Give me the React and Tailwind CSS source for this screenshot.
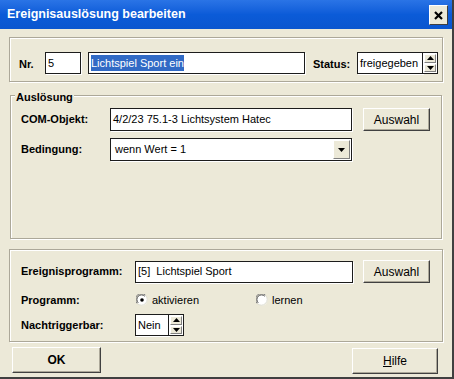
import React from "react";

const label = "font-['Liberation_Sans',Arial,sans-serif] text-[11px] font-bold text-black";
const field =
  "flex items-center bg-white border border-[#1c1c1c] shadow-[1px_1px_0_#ffffff] font-['Liberation_Sans',Arial,sans-serif] text-[11px] text-black pl-[2px] whitespace-nowrap overflow-hidden";
const btn =
  "flex items-center justify-center bg-[#ece9d8] border border-t-white border-l-white border-b-[#404040] border-r-[#404040] shadow-[inset_-1px_-1px_0_#aca899] font-['Liberation_Sans',Arial,sans-serif] text-[12px] text-black";
const frame = "border border-[#aca899] shadow-[inset_1px_1px_0_#ffffff,1px_1px_0_#ffffff]";
const plain = "font-['Liberation_Sans',Arial,sans-serif] text-[11px] text-black";

function Arrow({ up }) {
  return (
    <svg width="7" height="4" viewBox="0 0 7 4">
      {up ? <path d="M3.5 0 L7 4 L0 4 Z" fill="#000" /> : <path d="M0 0 L7 0 L3.5 4 Z" fill="#000" />}
    </svg>
  );
}

function Spin() {
  return (
    <div className="flex flex-col w-[15px] h-[22px] border border-[#1c1c1c] border-l-0 bg-white p-[1px] gap-[1px]">
      <div className="flex-1 flex items-center justify-center bg-[#ece9d8] border border-t-white border-l-white border-b-[#808080] border-r-[#808080]">
        <Arrow up />
      </div>
      <div className="flex-1 flex items-center justify-center bg-[#ece9d8] border border-t-white border-l-white border-b-[#808080] border-r-[#808080]">
        <Arrow />
      </div>
    </div>
  );
}

function Radio({ checked }) {
  return (
    <svg width="12" height="12" viewBox="0 0 12 12">
      <circle cx="6" cy="6" r="5.5" fill="#fff" />
      <path d="M1.2 9.5 A5.5 5.5 0 0 1 9.5 1.2" stroke="#808080" strokeWidth="1" fill="none" />
      <path d="M2.2 8.8 A4.3 4.3 0 0 1 8.8 2.2" stroke="#404040" strokeWidth="1" fill="none" />
      <path d="M9.5 1.2 A5.5 5.5 0 0 1 1.2 9.5" stroke="#dcdcd0" strokeWidth="1" fill="none" />
      {checked ? <circle cx="6" cy="6" r="1.8" fill="#000" /> : null}
    </svg>
  );
}

export default function App() {
  return (
    <div className="w-[454px] h-[379px] bg-[#ece9d8] border-r-2 border-b-2 border-r-[#404040] border-b-[#404040] flex flex-col overflow-hidden">
      <div className="h-[29px] shrink-0 flex items-center justify-between pl-[7px] pr-[4px] bg-gradient-to-b from-[#2a74e6] via-[#0b5bd8] to-[#0a56cf]">
        <span className="font-['Liberation_Sans',Arial,sans-serif] text-[12.5px] font-bold text-white">
          Ereignisauslösung bearbeiten
        </span>
        <div className="w-[19px] h-[20px] mt-[1px] flex items-center justify-center bg-[#ece9d8] border border-t-white border-l-white border-b-[#404040] border-r-[#404040]">
          <svg width="9" height="9" viewBox="0 0 9 9">
            <path d="M1 1 L8 8 M8 1 L1 8" stroke="#000" strokeWidth="2.2" />
          </svg>
        </div>
      </div>

      <div className={`mt-[8px] mx-[9px] h-[45px] flex items-start pt-[14px] pl-[9px] ${frame}`}>
        <span className={`${label} w-[26px] mt-[4px]`}>Nr.</span>
        <div className={`${field} w-[36px] h-[22px]`}>5</div>
        <div className={`${field} ml-[7px] w-[217px] h-[22px]`}>
          <span className="bg-[#316ac5] text-white">Lichtspiel Sport ein</span>
        </div>
        <span className={`${label} ml-[8px] w-[44px] mt-[4px]`}>Status:</span>
        <div className={`${field} w-[66px] h-[22px]`}>freigegeben</div>
        <Spin />
      </div>

      <div className={`relative mt-[13px] mx-[10px] h-[144px] pt-[12px] pl-[10px] ${frame}`}>
        <span className={`${label} absolute -top-[7px] left-[4px] bg-[#ece9d8] px-[1px]`}>Auslösung</span>
        <div className="flex items-center">
          <span className={`${label} w-[89px]`}>COM-Objekt:</span>
          <div className={`${field} w-[242px] h-[23px]`}>4/2/23 75.1-3 Lichtsystem Hatec</div>
          <div className={`${btn} ml-[11px] w-[67px] h-[23px]`}>Auswahl</div>
        </div>
        <div className="flex items-center mt-[7px]">
          <span className={`${label} w-[89px]`}>Bedingung:</span>
          <div className={`${field} w-[242px] h-[23px] justify-between pr-[1px]`}>
            <span className="pl-[2px]">wenn Wert = 1</span>
            <div className="w-[17px] h-[19px] flex items-center justify-center bg-[#ece9d8] border border-t-white border-l-white border-b-[#808080] border-r-[#808080]">
              <Arrow />
            </div>
          </div>
        </div>
      </div>

      <div className={`mt-[10px] mx-[9px] h-[93px] pt-[10px] pl-[11px] ${frame}`}>
        <div className="flex items-center">
          <span className={`${label} w-[114px]`}>Ereignisprogramm:</span>
          <div className={`${field} w-[218px] h-[22px]`}>[5]&nbsp; Lichtspiel Sport</div>
          <div className={`${btn} ml-[10px] w-[67px] h-[23px]`}>Auswahl</div>
        </div>
        <div className="flex items-center mt-[9px] h-[16px]">
          <span className={`${label} w-[115px]`}>Programm:</span>
          <Radio checked />
          <span className={`${plain} ml-[4px] w-[104px]`}>aktivieren</span>
          <Radio />
          <span className={`${plain} ml-[4px]`}>lernen</span>
        </div>
        <div className="flex items-center mt-[6px]">
          <span className={`${label} w-[114px]`}>Nachtriggerbar:</span>
          <div className={`${field} w-[34px] h-[22px]`}>Nein</div>
          <Spin />
        </div>
      </div>

      <div className="flex justify-between mt-[5px] pl-[12px] pr-[14px]">
        <div className={`${btn} w-[89px] h-[26px] font-bold text-[11px]`}>OK</div>
        <div className={`${btn} w-[86px] h-[26px] mt-[1px]`}>
          <span>
            <span className="underline">H</span>ilfe
          </span>
        </div>
      </div>
    </div>
  );
}
